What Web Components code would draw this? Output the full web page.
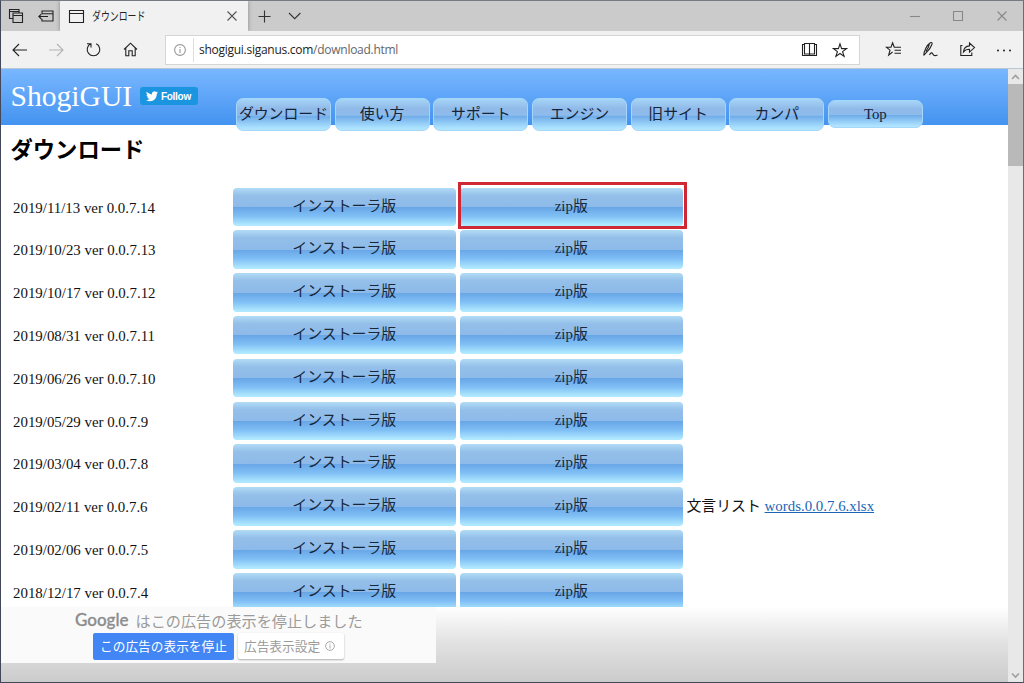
<!DOCTYPE html>
<html lang="ja">
<head>
<meta charset="utf-8">
<title>ダウンロード</title>
<style>
html, body {
    margin: 0;
    height: 100%;
    overflow: hidden;
}
body {
    font-family: "Liberation Serif", "Noto Sans CJK JP", serif;
    font-size: 14.88px;
    color: #111;
}
</style>
</head>
<body>
<browser-window>
    <browser-tabs slot="tabs">ダウンロード</browser-tabs>
    <browser-toolbar slot="toolbar" host="shogigui.siganus.com" path="/download.html"></browser-toolbar>
    <site-header slot="page">
        <span slot="brand">ShogiGUI</span>
        <nav-tab>ダウンロード</nav-tab>
        <nav-tab>使い方</nav-tab>
        <nav-tab>サポート</nav-tab>
        <nav-tab>エンジン</nav-tab>
        <nav-tab>旧サイト</nav-tab>
        <nav-tab>カンパ</nav-tab>
        <nav-tab short>Top</nav-tab>
    </site-header>
    <download-list slot="page">ダウンロード</download-list>
    <site-footer slot="page"></site-footer>
</browser-window>

<script>
(function () {
    const icons = {
        tabsAside: '<path d="M4 9.5H.5v-9H10V4M.5 2.5H10"/><path d="M4 4h9.5v9.5H4zM4 6.5h9.5"/>',
        setAside: '<path d="M4 4.500V2h11v10H4v-2M4 4.700h11M.8 7.500H10M3.500 4.800.8 7.500l2.700 2.700"/>',
        page: '<path d="M.5 1.5h14v12H.5zM.5 4.5h14"/>',
        close: '<path d="m1.5 1.5 9 9m0-9-9 9"/>',
        plus: '<path d="M6.500.5v12M.5 6.500h12"/>',
        chevron: '<path d="m1 1 5.700 5.700L12.400 1"/>',
        minimize: '<path d="M0 6.500h10"/>',
        maximize: '<path d="M.5 1.500h9v9h-9z"/>',
        back: '<path d="M1 7h14M7 1 1 7l6 6"/>',
        forward: '<path d="M0 7h14M8 1l6 6-6 6"/>',
        refresh: '<path d="M4.800 1.800A6.300 6.300 0 1 0 10.200 1.800M1 1.700h4V5.500"/>',
        home: '<path d="M1 7.500 7.500 1.200 14 7.500M2.800 6v7.800h3V8.700h3.400v5.100h3V6"/>',
        info: '<circle cx="6" cy="6" r="5.400"/><path d="M6 5v4M6 3v1.100"/>',
        book: '<path d="M2.500 .5h10v10.500h-10zM7.500 .5v12M2.500 1.500h-2v11h14v-11h-2"/>',
        star: '<path d="m7 .8 1.600 4.800h5L9.600 8.600l1.500 4.800L7 10.500l-4.100 2.900 1.500-4.800-4-3h5z"/>',
        favorites: '<path d="M8.300 5.200 6.600.8 5 5.300H.5L4 8.200l-1.300 4.900L6.600 10M8 5.300h7M8.500 8.300H15M8.500 11.300H15"/>',
        pen: '<path d="M.7 13.500C1 9 3.800 3 7.300.8 8.600 0 9.500.8 9 2.200 8 5 5.500 8.500 3.500 10.300L.7 13.500M6.300 1.800 5.500 5 2.800 9.500M6.500 13c1.200-2.800 2.600-2.600 3.300-1s2 2.200 4.700 1"/>',
        share: '<path d="M2.500 3.500H.8v10h11v-3M3.500 9.800c.4-3.600 2.500-5.800 6-5.900V1l5 4.600-5 4.500V7.300c-2.700 0-4.500.6-6 2.500z"/>',
        more: '<g fill="currentColor" stroke="none"><circle cx="1" cy="1.500" r="1"/><circle cx="7" cy="1.500" r="1"/><circle cx="13" cy="1.500" r="1"/></g>',
        up: '<path d="m1 5 3.500-3.500L8 5"/>',
        down: '<path d="M1 1.500 4.500 5 8 1.500"/>',
        bird: '<path fill="currentColor" stroke="none" d="M12 1.500c-.4.2-.9.3-1.400.4.500-.3.900-.8 1.100-1.400-.5.300-1 .5-1.600.6A2.500 2.500 0 0 0 5.900 3.400C3.900 3.300 2.100 2.300.8.800c-.7 1.100-.3 2.500.8 3.300-.4 0-.8-.1-1.100-.3 0 1.200.8 2.200 2 2.400-.4.100-.7.100-1.100 0 .3 1 1.200 1.700 2.300 1.700A5 5 0 0 1 0 9c5.200 3.200 11-.4 10.800-6.300.5-.3.900-.7 1.200-1.200z"/>'
    };

    class UiIcon extends HTMLElement {
        constructor() {
            super();
            this.attachShadow({mode: "open"});
        }

        connectedCallback() {
            const w = this.getAttribute("w") || 15;
            const h = this.getAttribute("h") || w;
            this.shadowRoot.innerHTML = `
            <style>
            :host { display: block; flex: none; line-height: 0; }
            svg { overflow: visible; fill: none; stroke: currentColor; stroke-width: var(--stroke, 1.1); }
            </style>
            <svg width="${w}" height="${h}" viewBox="0 0 ${w} ${h}">${icons[this.getAttribute("name")]}</svg>`;
        }
    }
    customElements.define("ui-icon", UiIcon);

    // registers an element whose shadow root is a clone of static markup
    function define(name, html) {
        const template = document.createElement("template");
        template.innerHTML = html;
        customElements.define(name, class extends HTMLElement {
            constructor() {
                super();
                this.attachShadow({mode: "open"});
                this.shadowRoot.appendChild(template.content.cloneNode(true));
            }
        });
    }

    define("scroll-bar", `
    <style>
    :host {
        display: flex;
        flex-direction: column;
        background: #e8e8e8;
        color: #a0a0a0;
        --stroke: 1.6;
    }
    .arrow { height: 15px; display: flex; align-items: center; justify-content: center; }
    .thumb { height: 82px; background: #b9b9b9; }
    .track { flex: 1; }
    </style>
    <div class="arrow"><ui-icon name="up" w="9" h="6"></ui-icon></div>
    <div class="thumb"></div>
    <div class="track"></div>
    <div class="arrow"><ui-icon name="down" w="9" h="6"></ui-icon></div>
    `);

    define("browser-window", `
    <style>
    :host {
        display: grid;
        grid-template-rows: 30px 38px 1fr;
        box-sizing: border-box;
        width: 1024px;
        height: 683px;
        border: 1px solid #42485a;
        border-top-color: #777b84;
        border-right-color: #5d7182;
        background: #fff;
    }
    .view { display: grid; grid-template-columns: 1fr 15px; min-height: 0; }
    .page { display: flex; flex-direction: column; min-width: 0; min-height: 0; }
    </style>
    <slot name="tabs"></slot>
    <slot name="toolbar"></slot>
    <div class="view">
        <div class="page"><slot name="page"></slot></div>
        <scroll-bar></scroll-bar>
    </div>
    `);

    define("browser-tabs", `
    <style>
    :host {
        display: flex;
        align-items: center;
        background: #cbcbcb;
        color: #222;
        font-family: "Noto Sans CJK JP", sans-serif;
        font-size: 12px;
    }
    .aside { display: flex; gap: 15px; padding-left: 8px; width: 52px; box-sizing: border-box; flex: none; }
    .tab {
        display: flex;
        align-items: center;
        box-sizing: border-box;
        width: 188px;
        height: 30px;
        margin-left: 7px;
        padding: 0 10px 0 9px;
        background: #f1f1f1;
        box-shadow: 0 0 4px rgba(0, 0, 0, .35);
        clip-path: inset(0 -5px 0 -5px);
    }
    .title { margin-left: 8px; width: 144px; white-space: nowrap; line-height: 28px; }
    .title span { display: inline-block; transform: scaleX(.74); transform-origin: 0 50%; }
    .extra { display: flex; align-items: center; gap: 17px; margin-left: 10px; flex: 1; color: #333; }
    .window { display: flex; align-items: center; gap: 33px; padding-right: 15px; color: #888; }
    .tab > ui-icon:last-child { color: #555; }
    </style>
    <div class="aside">
        <ui-icon name="tabsAside" w="14"></ui-icon>
        <ui-icon name="setAside" w="15"></ui-icon>
    </div>
    <div class="tab">
        <ui-icon name="page" w="15"></ui-icon>
        <div class="title"><span><slot></slot></span></div>
        <ui-icon name="close" w="12"></ui-icon>
    </div>
    <div class="extra">
        <ui-icon name="plus" w="13"></ui-icon>
        <ui-icon name="chevron" w="13" h="8"></ui-icon>
    </div>
    <div class="window">
        <ui-icon name="minimize" w="10" h="12"></ui-icon>
        <ui-icon name="maximize" w="10" h="12"></ui-icon>
        <ui-icon name="close" w="12"></ui-icon>
    </div>
    `);

    class BrowserToolbar extends HTMLElement {
        constructor() {
            super();
            this.attachShadow({mode: "open"});
        }

        connectedCallback() {
            this.shadowRoot.innerHTML = `
            <style>
            :host {
                display: flex;
                align-items: center;
                box-sizing: border-box;
                padding: 0 11px 1px 11px;
                background: #f1f1f1;
                border-bottom: 1px solid #b9c6d4;
                color: #222;
            }
            .nav { display: flex; align-items: center; gap: 22px; width: 153px; flex: none; }
            .nav ui-icon { margin-top: 1px; }
            .off { color: #b3b3b3; }
            .address {
                display: flex;
                align-items: center;
                box-sizing: border-box;
                width: 695px;
                height: 30px;
                margin-top: 1px;
                padding: 0 12px 0 8px;
                border: 1px solid #d5d5d5;
                background: #fff;
                font: 12px/28px "Open Sans", sans-serif;
                letter-spacing: -.27px;
            }
            .info { color: #999; }
            .url { flex: 1; margin-left: 7px; padding-left: 5px; line-height: 24px; border-left: 1px solid #ddd; }
            .path { color: #666; }
            .address ui-icon + ui-icon { margin-left: 16px; }
            .tools { display: flex; align-items: center; gap: 22px; margin-left: 26px; }
            </style>
            <div class="nav">
                <ui-icon name="back" w="15" h="14"></ui-icon>
                <ui-icon class="off" name="forward" w="15" h="14"></ui-icon>
                <ui-icon name="refresh" w="15"></ui-icon>
                <ui-icon name="home" w="15"></ui-icon>
            </div>
            <div class="address">
                <ui-icon class="info" name="info" w="12"></ui-icon>
                <div class="url">${this.getAttribute("host")}<span class="path">${this.getAttribute("path")}</span></div>
                <ui-icon name="book" w="15" h="13"></ui-icon>
                <ui-icon name="star" w="14"></ui-icon>
            </div>
            <div class="tools">
                <ui-icon name="favorites" w="15" h="14"></ui-icon>
                <ui-icon name="pen" w="15" h="14"></ui-icon>
                <ui-icon name="share" w="15" h="14"></ui-icon>
                <ui-icon name="more" w="15" h="3"></ui-icon>
            </div>`;
        }
    }
    customElements.define("browser-toolbar", BrowserToolbar);

    define("nav-tab", `
    <style>
    :host {
        display: block;
        box-sizing: border-box;
        width: 95px;
        height: 33px;
        border: 1px solid #a5d6fb;
        border-radius: 7px;
        background: linear-gradient(#a5d5f7, #90b9e8 32%, #8dbcec 53%, #6eaae8 54%, #a9e0ff 92%, #b5e6ff);
        color: #14243a;
        line-height: 30px;
        text-align: center;
        white-space: nowrap;
    }
    :host([short]) { height: 28px; line-height: 27px; margin-top: 2.5px; }
    </style>
    <slot></slot>
    `);

    define("site-header", `
    <style>
    :host {
        display: flex;
        flex: none;
        height: 56px;
        background: linear-gradient(#79b7ff, #4393f0);
        position: relative;
    }
    .brand { width: 129.5px; padding-left: 9.5px; font-size: 29.6px; line-height: 54px; color: #fff; }
    .follow {
        display: flex;
        align-items: center;
        gap: 3px;
        box-sizing: border-box;
        width: 58px;
        height: 18px;
        margin-top: 18px;
        padding-left: 6px;
        border-radius: 3px;
        background: #1b95e0;
        color: #fff;
        font: bold 10px "Liberation Sans", sans-serif;
        letter-spacing: -.3px;
    }
    nav { display: flex; align-items: flex-start; gap: 3.65px; margin: 28.5px 0 0 38px; }
    </style>
    <div class="brand"><slot name="brand"></slot></div>
    <div class="follow"><ui-icon name="bird" w="12" h="11"></ui-icon>Follow</div>
    <nav><slot></slot></nav>
    `);

    define("glossy-button", `
    <style>
    :host {
        display: block;
        position: relative;
        height: 38.5px;
        border-radius: 4px;
        background: linear-gradient(#b2dcf5, #94bfe9 20%, #8dbae9 50%, #68a6e6 51%, #7fbff5 74%, #b0e8ff 97%);
        color: #16283c;
        line-height: 36.8px;
        text-align: center;
    }
    /* red frame drawn around the recommended file */
    :host([marked])::after {
        content: "";
        position: absolute;
        inset: -6px -3.5px -3px -1.5px;
        border: 3px solid #cf2734;
    }
    </style>
    <slot></slot>
    `);

    const releases = [
        ["2019/11/13", "0.0.7.14"],
        ["2019/10/23", "0.0.7.13"],
        ["2019/10/17", "0.0.7.12"],
        ["2019/08/31", "0.0.7.11"],
        ["2019/06/26", "0.0.7.10"],
        ["2019/05/29", "0.0.7.9"],
        ["2019/03/04", "0.0.7.8"],
        ["2019/02/11", "0.0.7.6", "words.0.0.7.6.xlsx"],
        ["2019/02/06", "0.0.7.5"],
        ["2018/12/17", "0.0.7.4"]
    ];

    class DownloadList extends HTMLElement {
        constructor() {
            super();
            this.attachShadow({mode: "open"});
            this.render();
        }

        render() {
            const rows = releases.map(([date, version, words], i) => `
                <div class="version">${date} ver ${version}</div>
                <glossy-button>インストーラ版</glossy-button>
                <glossy-button ${i === 0 ? "marked" : ""}>zip版</glossy-button>
                <div class="note">${words ? `文言リスト <a href="#">${words}</a>` : ""}</div>`).join("");

            this.shadowRoot.innerHTML = `
            <style>
            :host { display: block; flex: 1; min-height: 0; overflow: hidden; }
            h1 { margin: 0; padding: 8px 0 0 9.5px; height: 62.5px; box-sizing: border-box; font-size: 22.3px; line-height: 35px; color: #000; }
            .rows {
                display: grid;
                grid-template-columns: 216px 223.5px 223.5px 1fr;
                grid-auto-rows: 38.5px;
                gap: 4.32px 3.5px;
                padding-left: 12px;
            }
            .version { line-height: 40.6px; }
            .note { line-height: 38.4px; white-space: nowrap; }
            a { color: #1a66b8; }
            </style>
            <h1><slot></slot></h1>
            <div class="rows">${rows}</div>`;
        }
    }
    customElements.define("download-list", DownloadList);

    define("site-footer", `
    <style>
    :host {
        display: block;
        flex: none;
        height: 75px;
        background: linear-gradient(#fff, #e3e3e3 45%, #cbcbcb);
        font-family: "Noto Sans CJK JP", sans-serif;
        color: #9b9b9b;
    }
    .ad { width: 435px; height: 56px; background: #fafafa; }
    .message { display: flex; align-items: center; gap: 7px; height: 26px; padding-left: 74px; font-size: 15.15px; white-space: nowrap; }
    .google { font: 500 17px/26px Lato, sans-serif; color: #8c8c8c; -webkit-text-stroke: .3px; }
    .actions { display: flex; gap: 4px; padding-left: 92px; font-size: 12.7px; line-height: 26px; white-space: nowrap; }
    .stop { width: 141px; height: 27px; border-radius: 2px; background: #4285f4; color: #fff; text-align: center; }
    .settings {
        display: flex;
        align-items: center;
        gap: 5px;
        box-sizing: border-box;
        width: 106px;
        height: 26px;
        padding-left: 6px;
        border-radius: 2px;
        background: #fff;
        box-shadow: 0 1px 2px rgba(0, 0, 0, .3);
    }
    .settings svg { fill: none; stroke: #999; }
    </style>
    <div class="ad">
        <div class="message"><span class="google">Google</span><span>はこの広告の表示を停止しました</span></div>
        <div class="actions">
            <div class="stop">この広告の表示を停止</div>
            <div class="settings">広告表示設定
                <svg width="10" height="10" viewBox="0 0 12 12"><circle cx="6" cy="6" r="5.2"/><path d="M6 5v4M6 3v1.2"/></svg>
            </div>
        </div>
    </div>
    `);
}());
</script>
</body>
</html>
